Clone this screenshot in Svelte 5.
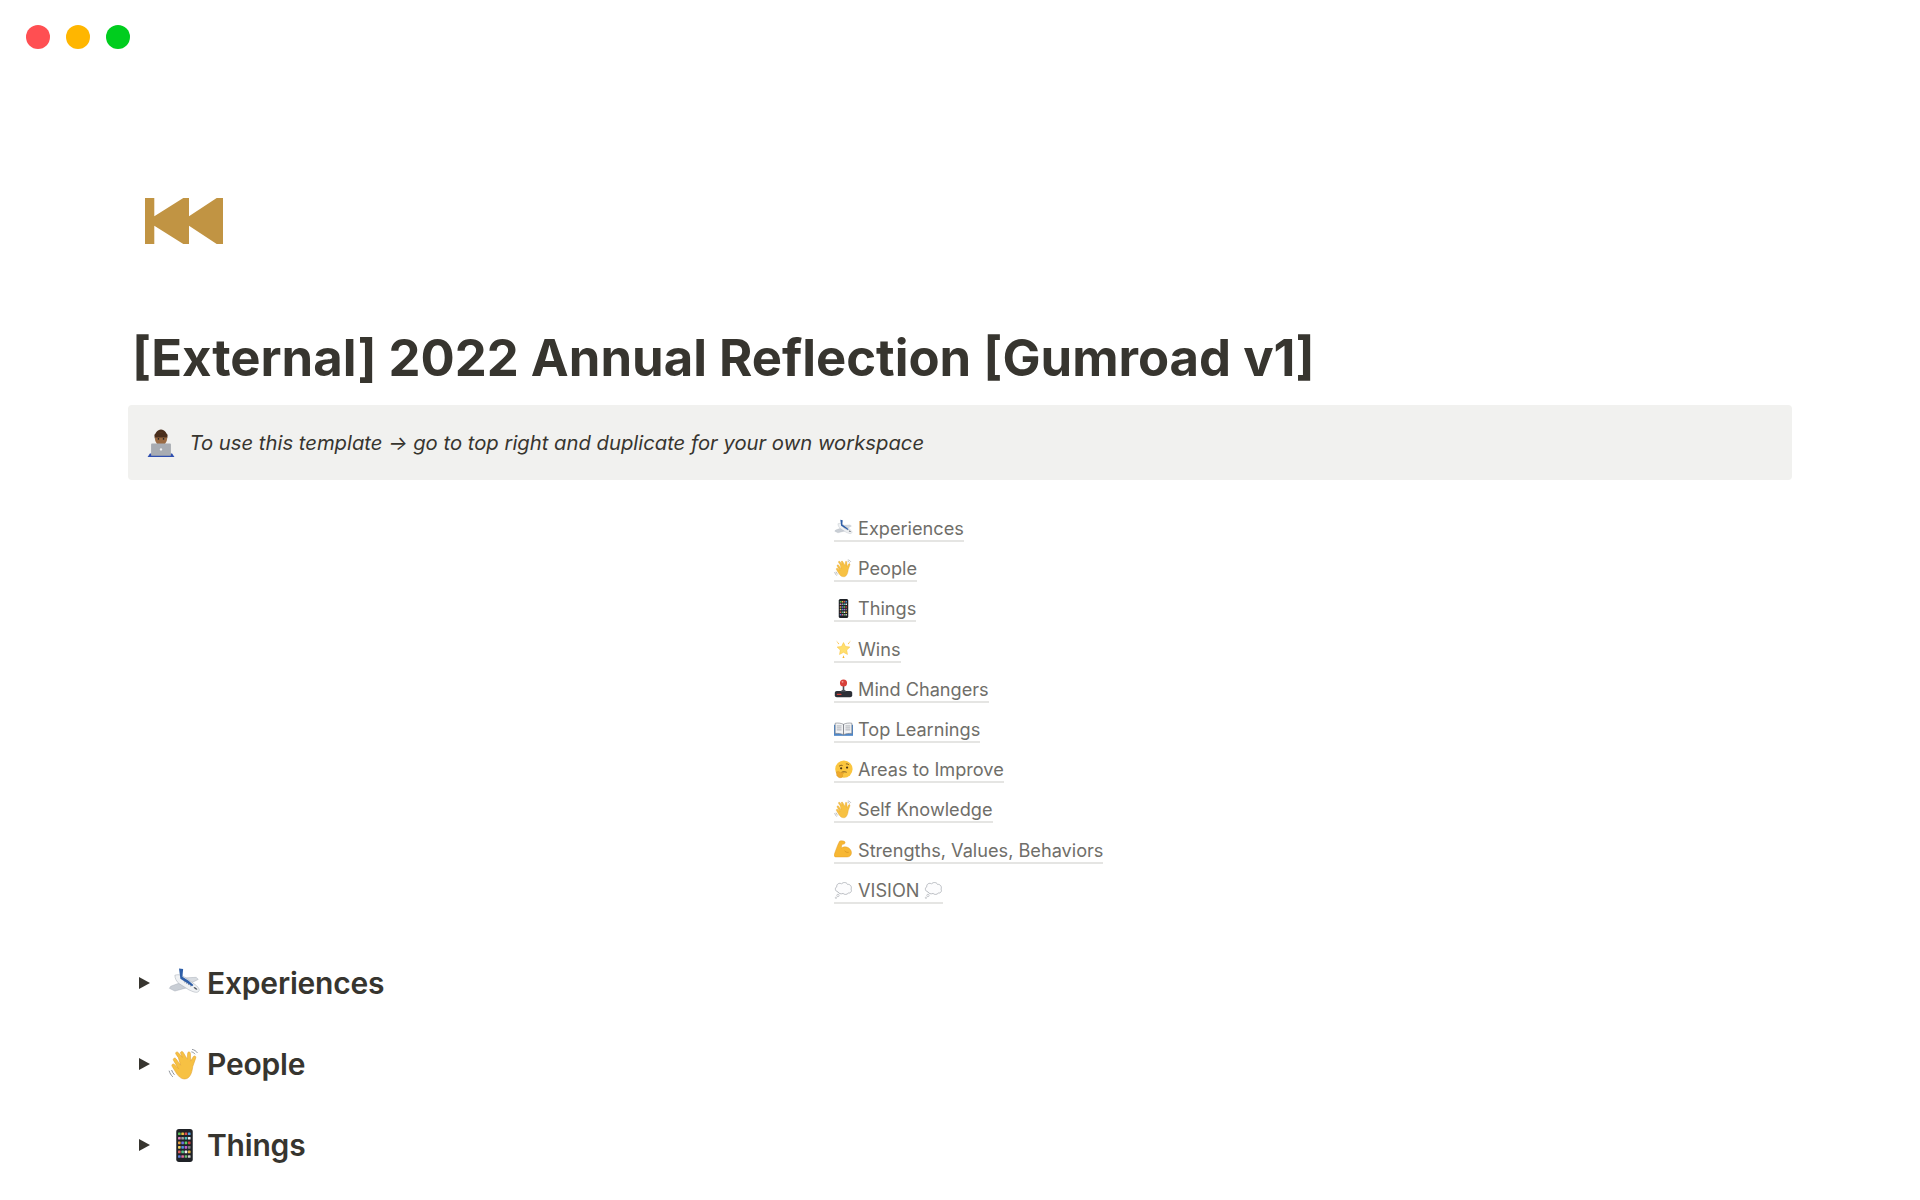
<script>
  const links = [
    ['plane', 'Experiences'], ['wave', 'People'], ['phone', 'Things'], ['star', 'Wins'],
    ['joystick', 'Mind Changers'], ['book', 'Top Learnings'], ['think', 'Areas to Improve'],
    ['wave', 'Self Knowledge'], ['muscle', 'Strengths, Values, Behaviors']
  ];
  const heads = [['plane', 'Experiences'], ['wave', 'People'], ['phone', 'Things']];
  const grid = ['#5ac05a','#e8c040','#e05050','#50a0e0','#e080c0','#a0a0a0','#50c0c0','#f0f0f0','#e8a040','#7070e0','#60d060','#d04040','#f0d060','#5090e0','#c060d0','#808080','#e06060','#50c080','#f0f0f0','#e0b040','#6080e0','#e070a0','#70c070','#d0d0d0'];
</script>

{#snippet emoji(name)}
  <svg class="emoji" viewBox="0 0 24 24" aria-hidden="true">
    {#if name === 'plane'}
      <path d="M10 11 2 14 1 15.500 5 17.500 14 15z" fill="#c9ced5" stroke="#9aa3ad" stroke-width=".3"/>
      <path d="M11 8 20.500 7.500 22 9 16 12z" fill="#d8dce1" stroke="#9aa3ad" stroke-width=".3"/>
      <path d="M5 6C8 5 10 6 13 8L20 13C22.500 15 23.500 17 22 18 20.500 19 18 18 15 16.500L8 12C6 10.500 5 8 5 6z" fill="#f0f2f4" stroke="#9aa3ad" stroke-width=".35"/>
      <path d="M8 1 11 1.500 10.500 7 15 10 18.500 13 17.500 14 9 8.500z" fill="#2f5fa8"/>
      <path d="M19.500 14.500l2 1.700-1 .3-2-1.500z" fill="#4a525c"/>
      <path d="M11.500 10.500l6 4" stroke="#6a737e" stroke-width=".5" stroke-dasharray="1 .8"/>
    {:else if name === 'wave'}
      <path d="M7.500 7 5.800 4.500c-.9-1.100.7-2.300 1.600-1.200l3 3.500L9.200 4c-.6-1.200 1.100-2.100 1.800-.9l3 5 .3-4.300c.1-1.400 2-1.200 2 .2l.2 5.500 1.900-3.200c.7-1.100 2.300-.3 1.800.9l-2.200 6.300C17.400 18.500 15.800 22.500 12 22.500c-3 0-4.700-2.400-6.200-4.600L3 13.300c-.8-1.200.8-2.300 1.700-1.300l2.800 3L4 9c-.7-1.200.9-2.300 1.800-1.200l3.400 4.700z" fill="#f7c143" stroke="#e0a030" stroke-width=".4"/>
      <path d="M.8 16.500c.5 1.800 1.400 3.200 2.700 4.500M2.600 16c.5 1.400 1.200 2.500 2.100 3.500M17.500 1c1.600.3 3 1.200 3.900 2.600M17 2.800c1.100.2 2 .8 2.700 1.700" stroke="#8a8f96" stroke-width=".7" fill="none"/>
    {:else if name === 'phone'}
      <rect x="6" y="0" width="12" height="24" rx="2" fill="#1f2227"/>
      {#each grid as c, i}
        <rect x={7.3 + (i % 4) * 2.4} y={2.5 + Math.floor(i / 4) * 3.3} width="1.900" height="1.900" rx=".4" fill={c}/>
      {/each}
    {:else if name === 'star'}
      <path d="M12 4.500l2.500 5 5.500.7-4 3.800 1 5.500-5-2.700-5 2.700 1-5.500-4-3.800 5.500-.7z" fill="#ffdf6e" stroke="#f9c23c" stroke-width=".7" stroke-linejoin="round"/>
      <path d="M2.500 1.500l4 4.500-.8.700zM21.500 1.500l-4 4.500.8.700zM12 20.500l1.300 3.500h-2.600z" fill="#f7b52c"/>
    {:else if name === 'joystick'}
      <rect x="1" y="15" width="22" height="8" rx="2.500" fill="#2c2f36"/>
      <rect x="3.500" y="18.500" width="6" height="1.800" rx=".8" fill="#d8403a"/>
      <path d="M8.500 16c0-1.500 2-2 2.500-2.500V8h2v5.500c.5.500 2.500 1 2.500 2.500z" fill="#4a4f58"/>
      <circle cx="12" cy="5" r="4.500" fill="#d8403a"/><circle cx="10.800" cy="3.600" r="1.200" fill="#f3a09a"/>
    {:else if name === 'book'}
      <path d="M0 6h24v14H0z" fill="#4f86c6"/>
      <path d="M1.500 4c3.500-.5 8 0 10.500 1.500v13c-2.500-1.300-7-1.800-10.500-1.500zM22.500 4c-3.500-.5-8 0-10.500 1.500v13c2.500-1.300 7-1.800 10.500-1.500z" fill="#f2f3f5" stroke="#6d7178" stroke-width=".7"/>
      <path d="M3.500 7.500h6M3.500 10h6M3.500 12.500h6M14.500 7.500h6M14.500 10h6M14.500 12.500h6" stroke="#8f949b" stroke-width=".9"/>
    {:else if name === 'think'}
      <circle cx="12.500" cy="11.500" r="11" fill="#fbc63f"/>
      <path d="M6.500 8c1-1.300 3-1.700 4.300-1M15 5c1.500-.3 3 .2 4 1.300" stroke="#6d4a1b" stroke-width="1.100" fill="none"/>
      <circle cx="9" cy="10.500" r="1.400" fill="#4a3214"/><circle cx="16.500" cy="9.500" r="1.400" fill="#4a3214"/>
      <path d="M9.500 15.500c2-.8 4.500-.8 6.500 0" stroke="#6d4a1b" stroke-width="1.100" fill="none"/>
      <path d="M3 15l2.500-.5 3.500 1.500 2.500-.3c1 .1 1 1.300 0 1.500l-1 .3.500 3c-.5 1.800-3.500 2.500-5 1.500L3.500 20z" fill="#eea92c" stroke="#c98a1e" stroke-width=".4"/>
    {:else if name === 'muscle'}
      <path d="M7 1.500c2-1 5-.6 6.500.5 1 .8.600 2.500-.5 3l-3 .7-.7 4.500c2.200-1.700 5.700-2.200 8.500-.7 2.800 1.500 4.700 4.500 4.200 7.500-.3 2.500-2.500 4.500-5.500 4.500H2.500c-1.800 0-2.800-1.500-2.200-3.200C1.800 14 4.500 6 7 1.500z" fill="#f7b733" stroke="#dd9620" stroke-width=".5"/>
      <path d="M13.500 13.500c1 1.800 3 2.500 5 2" stroke="#cf8a1c" stroke-width=".8" fill="none"/>
    {:else if name === 'cloud'}
      <path d="M5 15c-3.500-.5-4.500-5-1.500-6.500C3 5 7 3 9.500 5 11 2.500 16 2.500 17 5.500c3.500-.5 6 3 4.500 6 1.500 2.500-.5 5.500-3.500 5-1.500 2.200-5 2.200-6.500.5-2.500 1-5.500.3-6.500-2z" fill="#fcfcfd" stroke="#a9adb3" stroke-width="1"/>
      <circle cx="5" cy="19.500" r="1.500" fill="#fcfcfd" stroke="#a9adb3" stroke-width=".8"/>
      <circle cx="2.500" cy="22.500" r=".9" fill="#fcfcfd" stroke="#a9adb3" stroke-width=".7"/>
    {:else if name === 'laptop'}
      <path d="M6.500 8c0-4.500 2.300-7.500 5.500-7.500S17.500 3.500 17.500 8z" fill="#4a2e1c"/>
      <ellipse cx="12" cy="8.500" rx="5.200" ry="5.500" fill="#9a6a42"/>
      <path d="M6.800 7c2 .5 7.400.5 10.400 0l.5-2C15 2 9 2 6.300 5z" fill="#4a2e1c"/>
      <circle cx="9.800" cy="8.500" r=".7" fill="#222"/><circle cx="14.200" cy="8.500" r=".7" fill="#222"/>
      <path d="M.5 24l2-3h19l2 3z" fill="#2f4fb0"/>
      <rect x="3.500" y="12.500" width="17" height="10.500" rx=".8" fill="#a8acb2"/>
      <circle cx="12" cy="17.500" r="1" fill="#f0f1f2"/>
    {/if}
  </svg>
{/snippet}

<div class="page">
  <div class="traffic">
    <span class="dot red"></span><span class="dot amber"></span><span class="dot green"></span>
  </div>

  <main>
    <svg class="logo" viewBox="0 0 78 46" aria-hidden="true">
      <path d="M0 0H9.300V18.300L38.300 0H44V18.300L71.700 0H78V46H71.700L44 27.700V46H38.300L9.300 27.700V46H0Z" fill="#c19443"/>
    </svg>

    <h1>[External] 2022 Annual Reflection [Gumroad v1]</h1>

    <div class="callout">
      <span class="callout-icon">{@render emoji('laptop')}</span>
      <em>To use this template → go to top right and duplicate for your own workspace</em>
    </div>

    <nav class="toc">
      {#each links as [icon, label]}
        <div class="row"><a href="#top">{@render emoji(icon)}<span class="sp"></span>{label}</a></div>
      {/each}
      <div class="row"><a href="#top">{@render emoji('cloud')}<span class="sp"></span>VISION<span class="sp"></span>{@render emoji('cloud')}</a></div>
    </nav>

    <section class="toggles">
      {#each heads as [icon, label]}
        <div class="toggle">
          <span class="tri"></span>
          <h2>{@render emoji(icon)}<span class="sp2"></span>{label}</h2>
        </div>
      {/each}
    </section>
  </main>
</div>

<style>
  :global(body) { margin: 0; background: #fff; }
  .page { height: 1200px; overflow: hidden; font-family: Inter, "Liberation Sans", sans-serif; color: #37352f; }
  .traffic { display: flex; gap: 16px; padding: 25px 0 0 26px; }
  .dot { width: 24px; height: 24px; border-radius: 50%; }
  .red { background: #ff4f52; }
  .amber { background: #ffb600; }
  .green { background: #00cd1e; }
  main { padding: 149px 128px 0; }
  .logo { display: block; width: 78px; height: 46px; margin-left: 17px; }
  h1 { margin: 76px 0 0 4px; font-size: 50.800px; line-height: 76px; font-weight: 700; letter-spacing: 0; }
  .callout { margin-top: 9px; height: 75px; background: #f1f1ef; border-radius: 4px; display: flex; align-items: center; padding-left: 19px; font-size: 20.250px; }
  .callout-icon { display: flex; width: 28px; height: 28px; margin-right: 14.500px; }
  .callout-icon .emoji { width: 28px; height: 28px; }
  .emoji { display: inline-block; flex: none; }
  .toc { margin: 29px 0 0 706px; }
  .row { height: 40.200px; display: flex; align-items: center; }
  .row a { color: #6f6e69; text-decoration: none; font-size: 18.150px; line-height: 24px; border-bottom: 2px solid #e5e5e3; display: inline-flex; align-items: center; }
  .row .emoji { width: 19px; height: 19px; }
  .sp { width: 5px; }
  .toggles { margin-top: 32px; }
  .toggle { height: 81px; display: flex; align-items: center; padding-left: 11px; }
  .tri { width: 0; height: 0; border-left: 11px solid #37352f; border-top: 6px solid transparent; border-bottom: 6px solid transparent; margin-right: 18px; }
  h2 { margin: 0; font-size: 30px; font-weight: 600; display: flex; align-items: center; letter-spacing: -0.200px; }
  h2 .emoji { width: 33px; height: 33px; }
  .sp2 { width: 6px; }
</style>
